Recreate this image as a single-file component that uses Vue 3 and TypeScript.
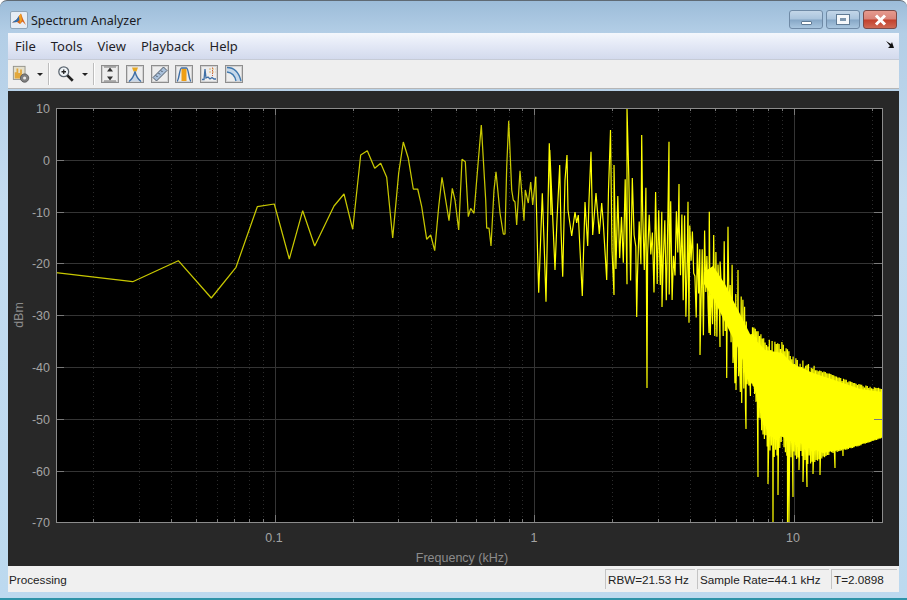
<script setup lang="ts">
const X0 = 56, X1 = 882, Y0 = 108, Y1 = 522
const xOf = (f: number) => 534 + 259.5 * Math.log10(f)
const yTicks = [108, 160, 212, 263, 315, 367, 419, 471, 522]
const yLabels = ['10', '0', '-10', '-20', '-30', '-40', '-50', '-60', '-70']
const decades = [0.01, 0.1, 1, 10]
const minorF: number[] = []
for (const d of decades) for (let m = 2; m <= 9; m++) { const f = d * m; if (f > 0.0146 && f < 22) minorF.push(f) }
const minorX = minorF.map(xOf)
const majorX = [0.1, 1, 10].map(xOf)
const xLabels = [{ x: 274, t: '0.1' }, { x: 534, t: '1' }, { x: 793, t: '10' }]

const hand: [number, number][] = [[56,272.7],[132.7,281.7],[178.3,260.7],[211.3,298],[236,267.3],[257.3,206.7],[274.3,204],[289.3,259],[302.7,210.7],[314.7,246],[334,206],[344,194],[352.7,229.3],[360.7,155],[367.3,150.7],[374.7,168.3],[380.7,163.3],[386.7,177.3],[392.7,238],[398.7,173],[403.3,142],[408.3,158.3],[413.3,189],[417.7,189],[421.7,206.7],[426.7,239.3],[430.7,235],[434.7,250.7],[438.7,206.7],[442,177.3],[449,220.7],[452.3,188.3],[455,200],[458.7,230],[462,159.3],[465.3,161.7],[468.3,216.7],[470.7,208.3],[474,213.3],[476.7,180],[481.3,125],[485.7,200],[486.7,228],[489,228],[491,246],[494,190],[496,171.7],[500,213],[503.3,234],[505,234],[506.7,167],[508.7,120.7],[511.7,190],[513.3,200],[515,202],[516.7,225],[520,170.7],[524,220.7],[525.3,190],[528.3,203],[530.7,182],[532.7,205],[535.7,176.7]]
const mid: [number, number][] = [[537.5,250],[538.7,292.7],[542.3,193.3],[544,240],[546,301.7],[549.3,143.3],[551,215],[549.8,150],[555,270],[557,220],[559.7,165],[561,230],[562.7,276.7],[565,180],[567,155],[568,210],[571.7,236],[575,212],[576.7,223],[578.3,215],[582.3,296],[585,202],[587.7,246],[589,200],[591,151.7],[592.7,235],[596,193],[599.3,234],[601.7,203],[603.3,223],[606.7,280],[608.5,190],[610.5,130],[612,250],[614,295]]

function interp(t: [number, number][], x: number): number {
  for (let i = 1; i < t.length; i++) if (x <= t[i][0]) {
    const a = t[i - 1], b = t[i]
    return a[1] + (b[1] - a[1]) * (x - a[0]) / (b[0] - a[0])
  }
  return t[t.length - 1][1]
}
const upper: [number, number][] = [[614,165],[627,172],[641,178],[650,190],[669,195],[679,205],[688,215],[700,228],[710,225],[728,245],[738,280],[750,326],[767,342],[783,345],[793,358],[813,368],[840,378],[860,385],[882,389]]
const lower: [number, number][] = [[614,275],[630,290],[650,290],[665,300],[690,322],[700,345],[710,335],[720,345],[727,375],[736,385],[742,395],[746,415],[753,385],[760,425],[766,445],[772,458],[778,455],[782,440],[786,455],[793,462],[800,456],[807,465],[817,461],[833,453],[853,448],[882,438]]
const spikes: [number, number][] = [[627,108],[641.7,135],[669,141.7],[679,184],[688,201.7],[709.3,211.7],[728,226.7],[738,270]]
const downs: [number, number][] = [[636.7,317],[647,388],[662,307],[689,322.7],[700,355],[709,333],[720,347],[726.7,378],[736,390],[741.7,403],[746,429],[758,477],[768,484],[773,522],[778,495],[782,418],[787.5,522],[789,522],[793,497],[799,470],[803,482],[807,487],[813,474],[820,475],[835,468],[843,456]]

const coreTop: [number, number][] = [[704,272],[713,266],[725,284],[738,310],[750,334],[765,350],[782,353],[793,364],[813,373],[840,382],[860,389],[882,392]]
const coreBottom: [number, number][] = [[704,284],[713,298],[725,322],[738,348],[750,378],[760,403],[773,433],[785,438],[800,443],[823,453],[853,447],[882,437]]
const core = [...coreTop, ...[...coreBottom].reverse()].map(p => p.join(',')).join(' ')

let seed = 71
const rnd = () => { seed = (seed * 16807) % 2147483647; return seed / 2147483647 }
const toPt = (p: [number, number]) => p[0].toFixed(1) + ',' + p[1].toFixed(1)
const lowTrace = hand.map(toPt).join(' ')
const pts: string[] = [toPt(hand[hand.length - 1]), ...mid.map(toPt)]
const marks = [
  ...spikes.map(s => ({ x: s[0], y: s[1] })),
  ...downs.map(s => ({ x: s[0], y: s[1] }))
].sort((a, b) => a.x - b.x)
let mi = 0
let x = 614
let up = true
while (x < 882) {
  while (mi < marks.length && marks[mi].x <= x) {
    const m = marks[mi++]
    pts.push(m.x.toFixed(1) + ',' + m.y.toFixed(1))
  }
  const u = interp(upper, x), l = interp(lower, x)
  const dense = x > 750 ? 1 : (x - 614) / 136
  const step = x > 750 ? 0.7 : 1.9 - 1.1 * dense
  const r = Math.pow(rnd(), x > 750 ? 4 : 2)
  const fringe = x > 815 ? 0.25 : 1
  let y: number
  if (up) y = u + (x > 750 ? (r * 10 - 3 * rnd()) * fringe : r * (l - u) * 0.62)
  else y = l - (x > 750 ? r * 14 * fringe : r * (l - u) * 0.62)
  pts.push(x.toFixed(1) + ',' + Math.min(522, y).toFixed(1))
  up = !up
  x += step
}
pts.push('882,389', '882,438')
const trace = pts.join(' ')

const menus = ['File', 'Tools', 'View', 'Playback', 'Help']
</script>

<template>
  <div class="window">
    <header class="titlebar">
      <svg class="app-icon" width="18" height="18" viewBox="0 0 18 18">
        <rect x="0.5" y="0.5" width="17" height="17" rx="1.5" fill="#e6edf5" stroke="#8ea4b8" />
        <path d="M2 11.5 L6.5 8.5 L9 5 L11 2.5 L13 8 L16 14 L12.5 10.5 L10 13 L7 11 Z" fill="#d8641c" />
        <path d="M2 11.5 L6.5 8.5 L9 5 L9.5 9 L7 11 Z" fill="#2f6fb0" />
        <path d="M9 5 L11 2.5 L12 9 L10 13 L9.5 9 Z" fill="#f0a020" />
      </svg>
      <span class="title">Spectrum Analyzer</span>
      <div class="caption">
        <div class="cbtn"><span class="min-glyph"></span></div>
        <div class="cbtn"><span class="max-glyph"></span></div>
        <div class="cbtn close">
          <svg width="13" height="12" viewBox="0 0 13 12"><path d="M2 1.5 L11 10.5 M11 1.5 L2 10.5" stroke="#fff" stroke-width="3" /></svg>
        </div>
      </div>
    </header>

    <div class="client">
      <nav class="menubar">
        <span v-for="m in menus" :key="m" class="menu">{{ m }}</span>
        <svg class="undock" width="10" height="9" viewBox="0 0 10 9"><path d="M1 1 L6 4 L7 2 L9 8 L3 8 L5 6 Z" fill="#111" /></svg>
      </nav>

      <div class="toolbar">
        <button class="tool">
          <svg width="20" height="20" viewBox="0 0 20 20">
            <rect x="1.5" y="1.5" width="13" height="14.5" fill="#e4dfca" stroke="#8f8f88" />
            <path d="M3 15 V8 H5 V4 H7 V9 H9 V5 H11 V15 Z" fill="#e2a83c" />
            <circle cx="14" cy="14.5" r="4.6" fill="#808080" stroke="#5a5a5a" />
            <circle cx="14" cy="14.5" r="1.7" fill="#e8e8e8" />
          </svg>
        </button>
        <span class="arrow"></span>
        <span class="sep"></span>
        <button class="tool">
          <svg width="20" height="20" viewBox="0 0 20 20">
            <circle cx="7.5" cy="7.5" r="5.5" fill="#eef3f7" stroke="#5c6670" stroke-width="1.4" />
            <path d="M5 7.5 H10 M7.5 5 V10" stroke="#222" stroke-width="1.4" />
            <path d="M11.5 11.5 L17.5 17.5" stroke="#222" stroke-width="3" />
          </svg>
        </button>
        <span class="arrow"></span>
        <span class="sep"></span>
        <div class="tools-row">
          <button class="tool boxed">
            <svg width="16" height="16" viewBox="0 0 16 16">
              <path d="M8 1.5 L5 5.5 H11 Z M8 14.5 L5 10.5 H11 Z" fill="#333" />
              <path d="M2 1 H14 M2 15 H14" stroke="#777" />
            </svg>
          </button>
          <button class="tool boxed">
            <svg width="16" height="16" viewBox="0 0 16 16">
              <path d="M5 1.5 H11 L9.5 5.5 H6.5 Z" fill="#e6a824" />
              <path d="M2 15.5 C5 13 7 10 8 5.5 C9 10 11 13 14 15.5" fill="#c8d6e6" stroke="#3f6fa6" stroke-width="1.3" />
            </svg>
          </button>
          <button class="tool boxed">
            <svg width="16" height="16" viewBox="0 0 16 16">
              <path d="M1 11.5 L11.5 1 L15 4.5 L4.5 15 Z" fill="#a9c0da" stroke="#4e5a68" />
              <path d="M4 9.5 L5.5 11 M6.5 7 L8 8.5 M9 4.5 L10.5 6" stroke="#3a4654" />
            </svg>
          </button>
          <button class="tool boxed">
            <svg width="16" height="16" viewBox="0 0 16 16">
              <rect x="5.5" y="2.5" width="5" height="12.5" fill="#ee9f16" />
              <path d="M1 15 C3 15 3.5 2 5.5 2 H10.5 C12.5 2 13 15 15 15" fill="none" stroke="#3f6fa6" stroke-width="1.4" />
            </svg>
          </button>
          <button class="tool boxed">
            <svg width="16" height="16" viewBox="0 0 16 16">
              <path d="M1 13.5 H3 L4 3 L5 12 L7 11 L9 13 L11 11.5 L13 13 H15" fill="none" stroke="#3f6fa6" stroke-width="1.3" />
              <path d="M11.5 1.5 V10" stroke="#c8603c" stroke-dasharray="1.5 1" />
              <path d="M8 3 H14.5 M8 6 H14.5" stroke="#d8a24c" stroke-dasharray="2 1" stroke-width="0.8" />
            </svg>
          </button>
          <button class="tool boxed">
            <svg width="16" height="16" viewBox="0 0 16 16">
              <path d="M1 1.5 C8 1.5 13 7 15 15 H10 C9 10 6 6.5 1 6 Z" fill="#c6d8ea" />
              <path d="M1 1.5 C8 1.5 13 7 15 15 M1 6 C6 6.5 9 10 10 15" fill="none" stroke="#3f78ae" stroke-width="1.3" />
            </svg>
          </button>
        </div>
      </div>

      <main class="panel">
        <svg class="plot" width="891" height="475" viewBox="8 91 891 475">
          <rect :x="X0" :y="Y0" :width="X1 - X0" :height="Y1 - Y0" fill="#000" />
          <g stroke="#2c2c2c" stroke-width="1" stroke-dasharray="1 3">
            <line v-for="m in minorX" :key="'g' + m" :x1="Math.round(m) + 0.5" :x2="Math.round(m) + 0.5" :y1="Y0" :y2="Y1" />
          </g>
          <g stroke="#343434" stroke-width="1">
            <line v-for="y in yTicks" :key="'h' + y" :x1="X0" :x2="X1" :y1="y + 0.5" :y2="y + 0.5" />
            <line v-for="m in majorX" :key="'v' + m" :x1="Math.round(m) + 0.5" :x2="Math.round(m) + 0.5" :y1="Y0" :y2="Y1" />
          </g>
          <polygon :points="core" fill="#ffff00" />
          <polyline :points="lowTrace" fill="none" stroke="#c8c800" stroke-width="1.25" stroke-linejoin="bevel" />
          <polyline :points="trace" fill="none" stroke="#ffff00" stroke-width="1.2" stroke-linejoin="bevel" />
          <g stroke="#7a7a7a" stroke-width="1">
            <template v-for="m in minorX" :key="'t' + m">
              <line :x1="Math.round(m) + 0.5" :x2="Math.round(m) + 0.5" :y1="Y0" :y2="Y0 + 3" />
              <line :x1="Math.round(m) + 0.5" :x2="Math.round(m) + 0.5" :y1="Y1 - 3" :y2="Y1" />
            </template>
            <template v-for="m in majorX" :key="'T' + m">
              <line :x1="Math.round(m) + 0.5" :x2="Math.round(m) + 0.5" :y1="Y0" :y2="Y0 + 7" />
              <line :x1="Math.round(m) + 0.5" :x2="Math.round(m) + 0.5" :y1="Y1 - 7" :y2="Y1" />
            </template>
            <template v-for="y in yTicks" :key="'Y' + y">
              <line :x1="X0" :x2="X0 + 8" :y1="y + 0.5" :y2="y + 0.5" />
              <line :x1="X1 - 8" :x2="X1" :y1="y + 0.5" :y2="y + 0.5" />
            </template>
          </g>
          <rect :x="X0 + 0.5" :y="Y0 + 0.5" :width="X1 - X0" :height="Y1 - Y0" fill="none" stroke="#8c8c8c" />
          <text v-for="(l, i) in yLabels" :key="l" class="lbl" x="50" :y="yTicks[i] + 5" text-anchor="end">{{ l }}</text>
          <text v-for="l in xLabels" :key="l.t" class="lbl" :x="l.x" y="542" text-anchor="middle">{{ l.t }}</text>
          <text class="lbl axis" x="462" y="562" text-anchor="middle">Frequency (kHz)</text>
          <text class="lbl axis" transform="translate(23 315) rotate(-90)" text-anchor="middle">dBm</text>
        </svg>
      </main>

      <footer class="statusbar">
        <span class="status">Processing</span>
        <span class="cell c1">RBW=21.53 Hz</span>
        <span class="cell c2">Sample Rate=44.1 kHz</span>
        <span class="cell c3">T=2.0898</span>
      </footer>
    </div>
  </div>
</template>

<style scoped>
.window {
  box-sizing: border-box;
  width: 907px;
  height: 600px;
  padding: 0 8px 6px;
  display: flex;
  flex-direction: column;
  border-radius: 7px 7px 0 0;
  border-top: 1px solid #5f6a74;
  border-bottom: 2px solid #2e93a8;
  background: linear-gradient(180deg, #9cbcd9 0, #b3cee6 32px, #c4dcf0 200px, #bcd9ef 100%);
  font-family: "Noto Sans", "Liberation Sans", sans-serif;
  overflow: hidden;
}
.titlebar {
  height: 32px;
  flex: none;
  box-sizing: border-box;
  display: flex;
  align-items: center;
  gap: 3px;
  padding: 6px 0 0 2px;
  position: relative;
}
.title {
  font-size: 12.5px;
  color: #1a1a22;
}
.caption {
  position: absolute;
  right: 2px;
  top: 9px;
  display: flex;
  gap: 3px;
}
.cbtn {
  width: 34px;
  height: 19px;
  box-sizing: border-box;
  border: 1px solid #6f8aa6;
  border-radius: 3px;
  background: linear-gradient(180deg, #c3d6e8 0, #aac4dd 48%, #86a7c6 52%, #a9c6df 100%);
  display: flex;
  align-items: center;
  justify-content: center;
}
.close {
  width: 34px;
  border-color: #7a4a48;
  background: linear-gradient(180deg, #e69a8e 0, #d8847a 48%, #c2402c 52%, #cf6a55 100%);
}
.min-glyph {
  width: 11px;
  height: 4px;
  margin-top: 6px;
  background: #fff;
  border: 1px solid #5f7a94;
  border-radius: 1px;
  box-sizing: border-box;
}
.max-glyph {
  width: 12px;
  height: 9px;
  box-sizing: border-box;
  border: 3px solid #f4f7fa;
  outline: 1px solid #5f7a94;
  background: #7d96ae;
}
.client {
  flex: 1;
  display: flex;
  flex-direction: column;
  min-height: 0;
}
.menubar {
  height: 27px;
  flex: none;
  box-sizing: border-box;
  display: flex;
  align-items: center;
  gap: 15px;
  padding: 0 0 0 7px;
  background: linear-gradient(180deg, #f4f7fc 0, #e4e9f6 45%, #d3daed 100%);
  border-bottom: 1px solid #c6cbd6;
  position: relative;
}
.menu {
  font-size: 13px;
  color: #1e1e28;
}
.undock {
  position: absolute;
  right: 4px;
  top: 7px;
}
.toolbar {
  height: 29px;
  flex: none;
  box-sizing: border-box;
  display: flex;
  align-items: center;
  padding: 0 0 0 4px;
  background: #efefef;
  border-bottom: 1px solid #b5b5b5;
}
.tool {
  width: 18px;
  height: 18px;
  padding: 0;
  border: 0;
  background: none;
  display: flex;
  align-items: center;
  justify-content: center;
}
.boxed {
  box-sizing: border-box;
  border: 1px solid #8e8e8e;
  box-shadow: inset 0 0 0 1px #d2d2d2;
  background: #ededed;
}
.arrow {
  width: 0;
  height: 0;
  margin: 0 0 0 6.5px;
  border-left: 3px solid transparent;
  border-right: 3px solid transparent;
  border-top: 3px solid #222;
}
.sep {
  width: 2px;
  height: 22px;
  margin: 0 7px 0 5.5px;
  background: linear-gradient(90deg, #bdbdbd 50%, #fff 50%);
}
.tools-row {
  display: flex;
  gap: 6.8px;
  margin-left: -1px;
}
.panel {
  height: 475px;
  flex: none;
  margin-top: 2px;
  background: #282828;
  overflow: hidden;
}
.plot { display: block; }
.lbl {
  font-family: "Liberation Sans", Arial, sans-serif;
  font-size: 12.5px;
  fill: #a3a3a3;
}
.axis {
  font-size: 12.5px;
  fill: #8c8c8c;
}
.statusbar {
  flex: 1;
  display: flex;
  align-items: center;
  background: #f0f0f0;
  font-family: "Liberation Sans", Arial, sans-serif;
  font-size: 11.7px;
  color: #222;
  padding: 0 2px 0 1px;
  gap: 2px;
}
.status { flex: 1; }
.cell {
  box-sizing: border-box;
  height: 20px;
  line-height: 20px;
  padding-left: 2px;
  border-left: 1px solid #c4c4c4;
  border-top: 1px solid #c4c4c4;
  white-space: nowrap;
}
.c1 { width: 90px; }
.c2 { width: 132px; }
.c3 { width: 66px; }
</style>

<style>
html, body { margin: 0; background: #fff; }
</style>
